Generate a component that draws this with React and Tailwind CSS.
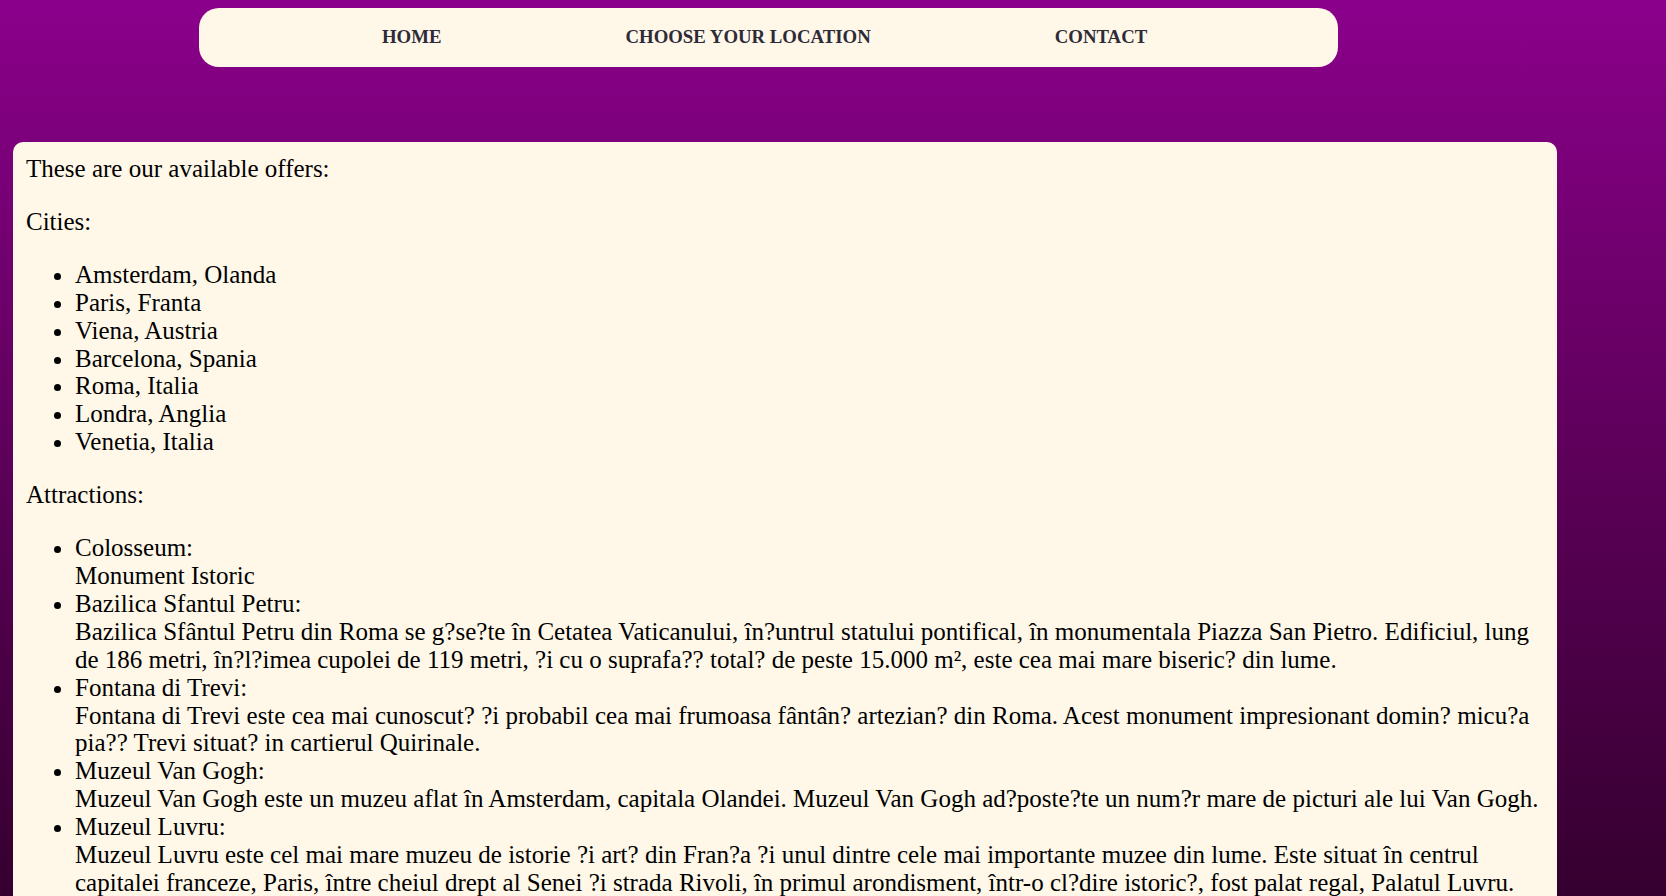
import React from 'react';

const cities = [
    'Amsterdam, Olanda',
    'Paris, Franta',
    'Viena, Austria',
    'Barcelona, Spania',
    'Roma, Italia',
    'Londra, Anglia',
    'Venetia, Italia',
];

const attractions = [
    { name: 'Colosseum:', desc: 'Monument Istoric' },
    {
        name: 'Bazilica Sfantul Petru:',
        desc: 'Bazilica Sfântul Petru din Roma se g?se?te în Cetatea Vaticanului, în?untrul statului pontifical, în monumentala Piazza San Pietro. Edificiul, lung de 186 metri, în?l?imea cupolei de 119 metri, ?i cu o suprafa?? total? de peste 15.000 m², este cea mai mare biseric? din lume.',
    },
    {
        name: 'Fontana di Trevi:',
        desc: 'Fontana di Trevi este cea mai cunoscut? ?i probabil cea mai frumoasa fântân? artezian? din Roma. Acest monument impresionant domin? micu?a pia?? Trevi situat? in cartierul Quirinale.',
    },
    {
        name: 'Muzeul Van Gogh:',
        desc: 'Muzeul Van Gogh este un muzeu aflat în Amsterdam, capitala Olandei. Muzeul Van Gogh ad?poste?te un num?r mare de picturi ale lui Van Gogh.',
    },
    {
        name: 'Muzeul Luvru:',
        desc: 'Muzeul Luvru este cel mai mare muzeu de istorie ?i art? din Fran?a ?i unul dintre cele mai importante muzee din lume. Este situat în centrul capitalei franceze, Paris, între cheiul drept al Senei ?i strada Rivoli, în primul arondisment, într-o cl?dire istoric?, fost palat regal, Palatul Luvru.',
    },
    {
        name: 'Big Ben:',
        desc: 'Big Ben este numele clopotului celui mare din turnul cu ceas al Palatului Westminster din Londra.',
    },
];

export default function App() {
    return (
        <div className="h-screen overflow-hidden bg-gradient-to-b from-[#8b008b] to-[#35002f] font-['Liberation_Serif',serif] text-black">
            {/* Nav bar */}
            <nav className="ml-[199px] mt-[8px] w-[1139px] h-[59px] rounded-[20px] bg-[#fff8e8] flex items-center pl-[183px] gap-[184px]">
                <span className="text-[18.8px] font-bold text-[#2e2b38]">HOME</span>
                <span className="text-[18.8px] font-bold text-[#2e2b38]">CHOOSE YOUR LOCATION</span>
                <span className="text-[18.8px] font-bold text-[#2e2b38]">CONTACT</span>
            </nav>

            {/* Offers box */}
            <div className="ml-[13px] mt-[75px] w-[1544px] rounded-[10px] bg-[#fff8e8] px-[13px] pt-[13px] pb-6 text-[25px] leading-[27.9px]">
                <p>These are our available offers:</p>
                <p className="mt-[25px]">Cities:</p>
                <ul className="mt-[25px] list-disc pl-[49px]">
                    {cities.map((c) => (
                        <li key={c}>{c}</li>
                    ))}
                </ul>
                <p className="mt-[25px]">Attractions:</p>
                <ul className="mt-[25px] list-disc pl-[49px]">
                    {attractions.map((a) => (
                        <li key={a.name}>
                            {a.name}
                            <br />
                            {a.desc}
                        </li>
                    ))}
                </ul>
            </div>
        </div>
    );
}
